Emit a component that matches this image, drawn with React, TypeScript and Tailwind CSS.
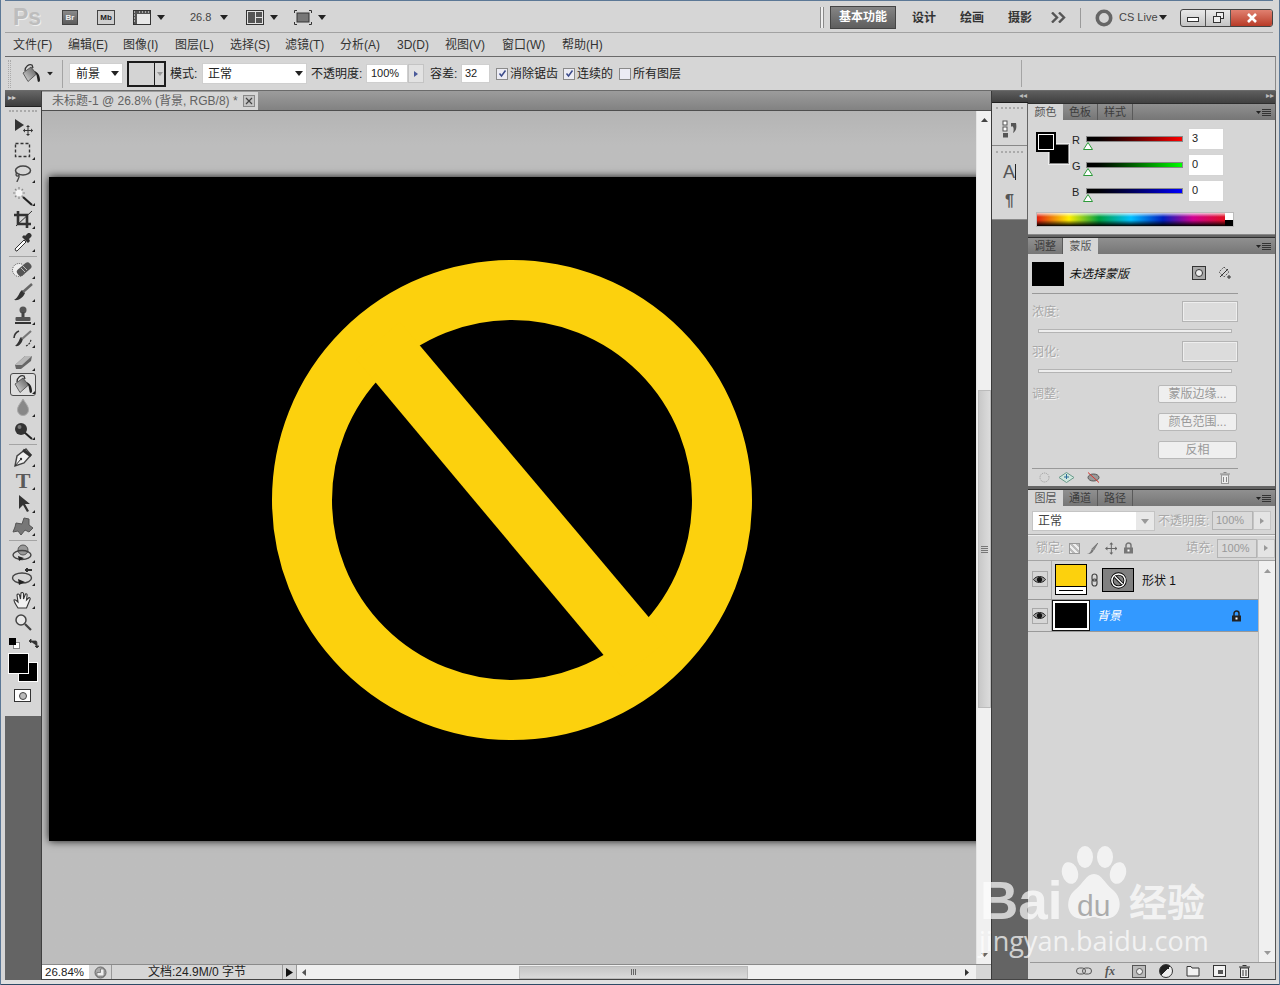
import React from "react";

const Caret = ({ className = "" }: { className?: string }) => (
  <svg width="8" height="5" viewBox="0 0 8 5" className={className}><polygon points="0,0 8,0 4,5" fill="#222" /></svg>
);

const Chk = ({ on = true }: { on?: boolean }) => (
  <span className="w-[12px] h-[12px] border border-[#8a8a8a] bg-[#ececf4] shrink-0 flex items-center justify-center">
    {on && (
      <svg width="9" height="9" viewBox="0 0 9 9"><path d="M1.5 4.5 L3.5 7 L7.5 1.5" fill="none" stroke="#3a4a8a" strokeWidth="1.5" /></svg>
    )}
  </span>
);

const PanelMenu = () => (
  <svg width="15" height="9" viewBox="0 0 15 9" className="shrink-0">
    <polygon points="0,3 5,3 2.5,6" fill="#222" />
    <path d="M6 1.5H15M6 3.5H15M6 5.5H15M6 7.5H15" stroke="#333" strokeWidth="1" />
  </svg>
);

function Tabs({ tabs, active }: { tabs: string[]; active: number }) {
  return (
    <div className="h-[17px] shrink-0 flex items-end bg-linear-to-b from-[#909090] to-[#767676] border-t border-[#2e2e2e] pr-[4px]">
      {tabs.map((t, i) => (
        <div
          key={t}
          className={
            i === active
              ? "w-[35px] h-[16px] bg-[#d6d6d6] text-[#555] text-[11px] leading-[16px] text-center"
              : "w-[35px] h-[16px] border-r border-[#5a5a5a] text-[#3c3c3c] text-[11px] leading-[16px] text-center"
          }
        >
          {t}
        </div>
      ))}
      <div className="flex-1 flex justify-end items-center h-[16px]"><PanelMenu /></div>
    </div>
  );
}

const Tool = ({ children, sel, flag = true }: { children: React.ReactNode; sel?: boolean; flag?: boolean }) => (
  <div className="h-[23px] flex items-center justify-center">
    <div className={sel ? "w-[26px] h-[23px] rounded-[3px] border border-[#4a4a4a] bg-[#dedede] flex items-center justify-center" : "w-[26px] h-[23px] flex items-center justify-center"}>
      <svg width="24" height="20" viewBox="0 0 24 20">
        {children}
        {flag && <polygon points="24,16 24,19 21,19" fill="#222" />}
      </svg>
    </div>
  </div>
);

const Sep = () => (
  <div className="h-[4px] flex items-center px-[4px]"><div className="h-px w-full bg-[#a4a4a4]" /></div>
);

const BucketShape = ({ id }: { id: string }) => (
  <>
    <defs>
      <linearGradient id={id} x1="0" y1="1" x2="1" y2="0">
        <stop offset="0" stopColor="#e4e4e4" />
        <stop offset="0.5" stopColor="#9a9a9a" />
        <stop offset="1" stopColor="#555" />
      </linearGradient>
    </defs>
    <path d="M4 7 C4 2 8 0 11 1 L12 4" fill="none" stroke="#333" strokeWidth="1.3" />
    <path d="M2 9 L10 3 L15.5 10 L7 17.5 Z" fill={"url(#" + id + ")"} stroke="#444" strokeWidth="0.8" />
    <path d="M13.5 7 C16.5 8 19 11 19 16 C19 18.5 16.5 18.5 16.5 16 L15.5 11 Z" fill="#222" />
  </>
);

const Prohibit = ({ s = 18, c = "#fff" }: { s?: number; c?: string }) => (
  <svg width={s} height={s} viewBox="0 0 18 18">
    <circle cx="9" cy="9" r="7" fill="none" stroke="#000" strokeWidth="3.4" />
    <circle cx="9" cy="9" r="7" fill="none" stroke={c} strokeWidth="1.6" />
    <path d="M5 4.5 L13.5 13" stroke="#000" strokeWidth="3.4" />
    <path d="M5 4.5 L13.5 13" stroke={c} strokeWidth="1.6" />
  </svg>
);

const Eye = () => (
  <div className="w-[16px] h-[16px] border border-[#a8a8a8] flex items-center justify-center">
    <svg width="13" height="9" viewBox="0 0 13 9">
      <path d="M0.5 4.5 C3 0.5 10 0.5 12.5 4.5 C10 8.5 3 8.5 0.5 4.5 Z" fill="#999" stroke="#222" />
      <circle cx="6.5" cy="4.5" r="2.6" fill="#111" />
    </svg>
  </div>
);

const LockIcon = ({ c = "#555" }: { c?: string }) => (
  <svg width="11" height="12" viewBox="0 0 11 12">
    <path d="M3 6V3.5a2.5 2.5 0 0 1 5 0V6" fill="none" stroke={c} strokeWidth="1.5" />
    <rect x="1" y="5.5" width="9" height="6" fill={c} />
    <rect x="4.5" y="7.5" width="2" height="2" fill="#fff" />
  </svg>
);

const Dis = "text-[#a8a8a8] text-[12px] [text-shadow:1px_1px_0_#f4f4f4]";

export default function App() {
  const menus: [string, string][] = [
    ["文件(F)", "w-[55px]"], ["编辑(E)", "w-[55px]"], ["图像(I)", "w-[52px]"], ["图层(L)", "w-[55px]"],
    ["选择(S)", "w-[55px]"], ["滤镜(T)", "w-[55px]"], ["分析(A)", "w-[57px]"], ["3D(D)", "w-[48px]"],
    ["视图(V)", "w-[57px]"], ["窗口(W)", "w-[60px]"], ["帮助(H)", "w-[60px]"],
  ];
  return (
    <div className="relative w-[1280px] h-[985px] overflow-hidden flex flex-col bg-[#d6d6d6] text-[#222] whitespace-nowrap [font-family:'Liberation_Sans','Noto_Sans_CJK_SC',sans-serif]">
      {/* title bar */}
      <div className="h-[33px] shrink-0 border-t border-[#5c7896] ml-[5px] mr-[7px] relative flex items-center pt-[1px] [&>*]:shrink-0">
        <div className="w-[53px] pl-[8px] text-[#bdbdbd] text-[23px] font-bold leading-none [text-shadow:1px_1px_0_#eee]">Ps</div>
        <div className="ml-[4px] w-[16px] h-[15px] bg-linear-to-b from-[#8a8a8a] to-[#5c5c5c] border border-[#444] text-[#eee] text-[8px] font-bold leading-[13px] text-center">Br</div>
        <div className="ml-[19px] w-[18px] h-[15px] bg-[#cfcfcf] border border-[#444] text-[#222] text-[8px] font-bold leading-[13px] text-center">Mb</div>
        <svg width="18" height="15" viewBox="0 0 18 15" className="ml-[18px]">
          <rect x="0.5" y="0.5" width="17" height="14" fill="#555" stroke="#333" />
          <rect x="4" y="4" width="13" height="10" fill="#e8e8e8" />
          <path d="M1 2h1M1 5h1M1 8h1M1 11h1M6 2h1M9 2h1M12 2h1M15 2h1" stroke="#fff" />
        </svg>
        <Caret className="ml-[6px]" />
        <div className="ml-[25px] text-[11px] text-[#444] w-[21px]">26.8</div>
        <Caret className="ml-[9px]" />
        <svg width="18" height="15" viewBox="0 0 18 15" className="ml-[18px]">
          <rect x="0.5" y="0.5" width="17" height="14" fill="#e4e4e4" stroke="#333" />
          <rect x="2" y="2" width="7" height="11" fill="#555" />
          <rect x="10" y="2" width="6" height="5" fill="#555" />
          <rect x="10" y="8" width="6" height="5" fill="#555" />
        </svg>
        <Caret className="ml-[6px]" />
        <svg width="18" height="15" viewBox="0 0 18 15" className="ml-[16px]">
          <path d="M0.5 3V0.5H3M15 0.5H17.5V3M17.5 12V14.5H15M3 14.5H0.5V12" fill="none" stroke="#333" />
          <rect x="3" y="3" width="12" height="9" fill="#777" stroke="#333" />
        </svg>
        <Caret className="ml-[6px]" />
        <div className="ml-[494px] w-[4px] h-[21px] border-x border-[#8a8a8a] bg-[#f0f0f0]" />
        <div className="ml-[6px] w-[66px] h-[23px] bg-linear-to-b from-[#858585] to-[#5e5e5e] border border-[#444] text-white text-[12px] font-bold leading-[21px] text-center">基本功能</div>
        <div className="ml-[16px] w-[24px] text-[12px] font-bold text-[#333]">设计</div>
        <div className="ml-[24px] w-[24px] text-[12px] font-bold text-[#333]">绘画</div>
        <div className="ml-[24px] w-[24px] text-[12px] font-bold text-[#333]">摄影</div>
        <svg width="15" height="11" viewBox="0 0 15 11" className="ml-[19px]">
          <path d="M1 0.5 L6 5.5 L1 10.5M8 0.5 L13 5.5 L8 10.5" fill="none" stroke="#555" strokeWidth="2.4" />
        </svg>
        <div className="ml-[14px] w-px h-[20px] bg-[#9a9a9a]" />
        <svg width="18" height="18" viewBox="0 0 18 18" className="ml-[14px]"><circle cx="9" cy="9" r="6.7" fill="none" stroke="#666" strokeWidth="3.6" /></svg>
        <div className="ml-[6px] text-[11px] text-[#444] w-[40px]">CS Live</div>
        <Caret className="ml-[0px]" />
        <div className="ml-[13px] w-[93px] h-[18px] rounded-[3px] border border-[#444] flex overflow-hidden bg-linear-to-b from-[#eaeaea] to-[#c4c4c4]">
          <div className="w-[25px] border-r border-[#555] flex items-center justify-center"><div className="w-[12px] h-[5px] border border-[#333] bg-white mt-[4px]" /></div>
          <div className="w-[25px] border-r border-[#555] flex items-center justify-center">
            <svg width="11" height="11" viewBox="0 0 11 11"><rect x="3.5" y="0.5" width="7" height="6" fill="#eee" stroke="#333" /><rect x="0.5" y="4.5" width="7" height="6" fill="#eee" stroke="#333" /></svg>
          </div>
          <div className="flex-1 bg-linear-to-b from-[#e08070] to-[#b83a26] flex items-center justify-center">
            <svg width="12" height="10" viewBox="0 0 12 10"><path d="M2 1 L10 9M10 1 L2 9" stroke="#fff" strokeWidth="2.6" /></svg>
          </div>
        </div>
        <div className="absolute left-0 right-0 bottom-0 h-px bg-[#a2a2a2]" />
      </div>

      {/* menu */}
      <div className="h-[23px] shrink-0 pl-[13px] flex items-center text-[12px] text-[#333]">
        {menus.map(([m, w]) => (<span key={m} className={w + " shrink-0"}>{m}</span>))}
      </div>

      {/* options */}
      <div className="h-[35px] shrink-0 ml-[5px] mr-[4px] border-y border-[#6a6a6a] border-r border-r-[#888] flex items-center text-[12px] [&>*]:shrink-0">
        <div className="ml-[3px] w-[3px] h-[28px] border-x border-dotted border-[#aaa]" />
        <svg width="20" height="20" viewBox="0 0 20 20" className="ml-[10px]"><BucketShape id="bk1" /></svg>
        <Caret className="ml-[5px] scale-75" />
        <div className="ml-[8px] w-px h-[28px] bg-[#a4a4a4]" />
        <div className="ml-[6px] w-[54px] h-[21px] bg-white border border-[#cfcfcf] flex items-center justify-between pl-[6px] pr-[3px]">前景<Caret /></div>
        <div className="ml-[4px] w-[39px] h-[26px] border-2 border-[#1c1c1c] flex">
          <div className="flex-1 bg-[#d4d4d4]" />
          <div className="w-[10px] border-l border-[#1c1c1c] flex items-center justify-center"><svg width="6" height="4" viewBox="0 0 6 4"><polygon points="0,0 6,0 3,4" fill="#999" /></svg></div>
        </div>
        <span className="ml-[4px] w-[28px]">模式:</span>
        <div className="ml-[4px] w-[105px] h-[21px] bg-white border border-[#cfcfcf] flex items-center justify-between pl-[5px] pr-[3px]">正常<Caret /></div>
        <span className="ml-[4px] w-[53px]">不透明度:</span>
        <div className="ml-[2px] w-[42px] h-[19px] bg-white border border-[#cfcfcf] text-[11px] leading-[17px] pl-[4px]">100%</div>
        <div className="w-[16px] h-[19px] bg-[#e2e2e2] border border-[#c4c4c4] flex items-center justify-center"><svg width="4" height="6" viewBox="0 0 4 6"><polygon points="0,0 4,3 0,6" fill="#4a5a9a" /></svg></div>
        <span className="ml-[6px] w-[28px]">容差:</span>
        <div className="ml-[3px] w-[29px] h-[19px] bg-white border border-[#cfcfcf] text-[11px] leading-[17px] pl-[3px]">32</div>
        <div className="ml-[6px]"><Chk /></div>
        <span className="ml-[2px] w-[53px]">消除锯齿</span>
        <div className="ml-[0px]"><Chk /></div>
        <span className="ml-[2px] w-[42px]">连续的</span>
        <div className="ml-[0px]"><Chk on={false} /></div>
        <span className="ml-[2px] w-[53px]">所有图层</span>
        <div className="ml-[335px] w-px h-[27px] bg-[#a4a4a4]" />
      </div>

      {/* main */}
      <div className="flex-1 min-h-0 flex ml-[5px] mr-[4px]">
        {/* tools */}
        <div className="w-[37px] shrink-0 flex flex-col border-r border-[#3f3f3f] bg-[#646464]">
          <div className="h-[16px] shrink-0 bg-linear-to-b from-[#666] to-[#3e3e3e] text-[#ccc] text-[8px] leading-[14px] pl-[3px] border-b border-[#222]">▸▸</div>
          <div className="h-[609px] shrink-0 bg-[#d6d6d6] flex flex-col">
            <div className="mx-[4px] mt-[1px] border-b-2 border-dotted border-[#aaa] h-[4px]" />
            <div className="h-[4px]" />
            <Tool flag={false}><polygon points="4,1 4,13 13,7" fill="#333" /><path d="M17 8V17M12.5 12.5H21.5" stroke="#333" /><path d="M17 7l-2 2h4zM17 18l-2-2h4zM12 12.5l2-2v4zM22 12.5l-2-2v4z" fill="#333" /></Tool>
            <Tool><rect x="4.5" y="2.5" width="14" height="13" fill="none" stroke="#333" strokeWidth="1.4" strokeDasharray="3 2" /></Tool>
            <Tool><ellipse cx="12" cy="6.5" rx="7.5" ry="4.5" fill="none" stroke="#444" strokeWidth="1.5" /><path d="M5.5 9 C4 12 7 13 8 11 C9 14 6 16 6 18" fill="none" stroke="#444" strokeWidth="1.3" /></Tool>
            <Tool><path d="M12 10 L21 18" stroke="#222" strokeWidth="2.2" /><path d="M8 0V12M2 6H14M4 2L12 10M12 2L4 10" stroke="#8a8a8a" strokeWidth="1.2" /><circle cx="8" cy="6" r="3.5" fill="#f4f4f4" /></Tool>
            <Tool><path d="M7 1V14H20" fill="none" stroke="#333" strokeWidth="2.6" /><path d="M3 5H16V18" fill="none" stroke="#333" strokeWidth="2.6" /><path d="M5 16L21 1" stroke="#333" /></Tool>
            <Tool><path d="M5 18 L4 16 L13 7 L15 9 L6 18 Z" fill="#fff" stroke="#333" /><path d="M12 5 L17 10 L19 8 L18 6 L20 4 A2.5 2.5 0 0 0 16 1 L14 3 L13 2 L11 4 Z" fill="#333" /></Tool>
            <Sep />
            <Tool><circle cx="8" cy="10" r="6.5" fill="#eee" stroke="#555" strokeDasharray="1 1" /><rect x="5" y="5.5" width="16" height="7.5" rx="3" fill="#555" transform="rotate(-40 13 9)" /><path d="M10 8l4 4M12 6l4 4" stroke="#bbb" strokeWidth="1" /></Tool>
            <Tool><path d="M3 17 C9 18 13 13 14 10 L11 7 C8 9 8 14 3 17 Z" fill="#333" /><path d="M12 9 L21 1" stroke="#666" strokeWidth="2.4" /></Tool>
            <Tool><circle cx="12" cy="4" r="3.5" fill="#555" /><rect x="10.5" y="6" width="3" height="6" fill="#444" /><rect x="4.5" y="11" width="15" height="4" rx="1" fill="#555" /><rect x="4" y="16" width="16" height="2" fill="#333" /></Tool>
            <Tool><path d="M4 17 C9 18 11 13 12 10 L10 8 C8 10 8 14 4 17 Z" fill="#333" /><path d="M11 10 L20 2" stroke="#777" strokeWidth="2.2" /><path d="M8 2 A8 8 0 0 0 3 9" fill="none" stroke="#333" strokeWidth="1.6" /><path d="M15 17 A8 8 0 0 0 20 10" fill="none" stroke="#333" strokeWidth="1.2" strokeDasharray="2 1" /></Tool>
            <Tool><polygon points="4,13 14,4 21,4 20,9 10,17 5,17" fill="#666" /><polygon points="4,13 14,4 21,4 11,13" fill="#b8b8b8" /></Tool>
            <Tool sel><g transform="translate(2 0)"><BucketShape id="bk2" /></g></Tool>
            <Tool><path d="M12 1 C9 6 6.5 8 6.5 12 A5.5 5.5 0 0 0 17.5 12 C17.5 8 15 6 12 1 Z" fill="#888" stroke="#aaa" /></Tool>
            <Tool><path d="M13 11 L21 18" stroke="#222" strokeWidth="2" /><circle cx="10" cy="8" r="6" fill="#333" /><circle cx="8.5" cy="6" r="2" fill="#777" /></Tool>
            <Sep />
            <Tool><path d="M4 18 L6 8 L15 1 L20 7 L13 15 Z" fill="#f0f0f0" stroke="#444" strokeWidth="1.4" /><path d="M12 2 L20 8" stroke="#333" strokeWidth="3" /><path d="M4 18 L10 11" stroke="#333" /><circle cx="10" cy="11" r="1.2" fill="#333" /></Tool>
            <div className="relative">
              <Tool><rect width="0" height="0" /></Tool>
              <span className="absolute inset-0 flex items-center justify-center text-[22px] leading-none text-[#5a5a5a] font-bold [font-family:'Liberation_Serif',serif]">T</span>
            </div>
            <Tool><polygon points="8,1 8,15 12,11 16,18 18,17 14,10 19,10" fill="#333" /></Tool>
            <Tool><path d="M5 6 L11 7 L13 1 L18 2 L18 8 L22 11 L18 15 L14 13 L10 18 L7 14 L2 15 L4 10 Z" fill="#777" stroke="#555" /></Tool>
            <Sep />
            <Tool><circle cx="12" cy="6" r="5" fill="#999" stroke="#555" /><ellipse cx="11" cy="11" rx="9" ry="4.5" fill="none" stroke="#444" strokeWidth="1.4" /><polygon points="7,12 13,14 8,17" fill="#222" /></Tool>
            <Tool><ellipse cx="11" cy="11" rx="9.5" ry="5" fill="none" stroke="#444" strokeWidth="1.4" /><polygon points="7,12 14,15 8,18" fill="#222" /><path d="M14 3H21" stroke="#333" strokeWidth="2" /><rect x="15" y="1" width="2" height="4" fill="#333" /></Tool>
            <Tool><path d="M7 18 C5 15 3 12 3 10 C4 9 6 11 7 12 L6 5 C6.5 3.5 8 4 8.5 5 L9.5 9 L10 3 C11 2 12 2.5 12.5 3.5 L12.5 9 L14.5 4 C15.5 3.5 16.5 4 16 6 L15.5 10 L18 7.5 C19 7.5 19.5 8.5 19 9.5 L15.5 18 Z" fill="#f2f2f2" stroke="#333" strokeWidth="1.1" /></Tool>
            <Tool flag={false}><circle cx="10" cy="7" r="5" fill="#e8e8e8" stroke="#444" strokeWidth="1.5" /><path d="M14 11 L20 17" stroke="#444" strokeWidth="2.2" /></Tool>
            <div className="h-[3px]" />
            <div className="h-[13px] flex items-center pl-[4px] gap-[8px]">
              <div className="relative w-[11px] h-[11px]">
                <div className="absolute right-0 bottom-0 w-[7px] h-[7px] bg-white border border-[#888]" />
                <div className="absolute left-0 top-0 w-[7px] h-[7px] bg-black" />
              </div>
              <svg width="11" height="11" viewBox="0 0 11 11"><path d="M2 3 L8 3 C9 3 9 5 9 8M1 3l2-2v4zM9 10l-2-2h4z" fill="#333" stroke="#333" strokeWidth="0.8" /></svg>
            </div>
            <div className="relative h-[35px] mt-[3px]">
              <div className="absolute left-[13px] top-[9px] w-[20px] h-[20px] bg-black border border-white" />
              <div className="absolute left-[3px] top-0 w-[21px] h-[21px] bg-black border border-white" />
            </div>
            <div className="ml-[9px] mt-[1px] w-[17px] h-[13px] bg-white border border-[#333] flex items-center justify-center"><div className="w-[8px] h-[8px] rounded-full bg-[#bbb] border border-[#444]" /></div>
          </div>
        </div>

        {/* center */}
        <div className="flex-1 min-w-0 flex flex-col">
          <div className="h-[20px] shrink-0 bg-linear-to-b from-[#9c9c9c] to-[#828282] border-b border-[#4e4e4e] flex items-end">
            <div className="w-[216px] h-[18px] bg-[#d6d6d6] flex items-center pl-[10px] text-[12px] text-[#626262] whitespace-nowrap">
              <span className="w-[191px]">未标题-1 @ 26.8% (背景, RGB/8) *</span>
              <div className="w-[12px] h-[12px] border border-[#888] bg-[#c4c4c4] flex items-center justify-center">
                <svg width="8" height="8" viewBox="0 0 8 8"><path d="M1 1L7 7M7 1L1 7" stroke="#444" strokeWidth="1.2" /></svg>
              </div>
            </div>
          </div>
          <div className="flex-1 min-h-0 flex">
            <div className="flex-1 min-w-0 bg-linear-to-b from-[#b4b4b4] via-[#bdbdbd] via-[4%] to-[#bdbdbd] overflow-hidden">
              <div className="ml-[7px] mt-[66px] w-[960px] h-[664px] bg-black shadow-[0_0_8px_rgba(0,0,0,0.9)] flex">
                <svg width="480" height="480" viewBox="0 0 480 480" className="ml-[223px] mt-[83px]">
                  <circle cx="240" cy="240" r="210" fill="none" stroke="#fcd10d" strokeWidth="60" />
                  <polygon points="84,99 350,417 396,380 128,62" fill="#fcd10d" />
                </svg>
              </div>
            </div>
            {/* v scroll */}
            <div className="w-[15px] shrink-0 bg-[#f0f0f0] flex flex-col items-center pt-[7px] border-l border-[#e4e4e4]">
              <svg width="7" height="4" viewBox="0 0 7 4"><polygon points="3.5,0 7,4 0,4" fill="#444" /></svg>
              <div className="mt-[268px] w-[13px] h-[318px] bg-linear-to-r from-[#c8c8c8] to-[#dcdcdc] border border-[#bbb] flex flex-col items-center justify-center gap-[1px]">
                <div className="w-[7px] h-px bg-[#777]" /><div className="w-[7px] h-px bg-[#777]" /><div className="w-[7px] h-px bg-[#777]" /><div className="w-[7px] h-px bg-[#777]" />
              </div>
              <div className="mt-[245px]"><svg width="7" height="4" viewBox="0 0 7 4"><polygon points="0,0 7,0 3.5,4" fill="#666" /></svg></div>
            </div>
          </div>
          {/* status */}
          <div className="h-[16px] shrink-0 flex border-t border-[#8a8a8a] border-b border-b-[#444] text-[12px] leading-[14px]">
            <div className="w-[47px] bg-white pl-[3px] text-[11.5px] text-[#222]">26.84%</div>
            <div className="w-[23px] border-r border-[#999] flex items-center justify-center">
              <svg width="13" height="13" viewBox="0 0 13 13"><circle cx="6.5" cy="6.5" r="5.5" fill="#aaa" stroke="#666" /><path d="M6.5 6.5V3H10V10H3V6.5Z" fill="#eee" stroke="#555" strokeWidth="0.6" /></svg>
            </div>
            <div className="w-[171px] text-center border-r border-[#999]">文档:24.9M/0 字节</div>
            <div className="w-[14px] border-r border-[#999] flex items-center justify-center"><svg width="7" height="9" viewBox="0 0 7 9"><polygon points="0,0 7,4.5 0,9" fill="#111" /></svg></div>
            <div className="flex-1 bg-[#f0f0f0] flex items-center pl-[5px]">
              <svg width="4" height="7" viewBox="0 0 4 7"><polygon points="4,0 4,7 0,3.5" fill="#555" /></svg>
              <div className="ml-[213px] w-[229px] h-[13px] bg-linear-to-b from-[#c6c6c6] to-[#dadada] border border-[#bbb] flex items-center justify-center gap-[1px]">
                <div className="w-px h-[6px] bg-[#666]" /><div className="w-px h-[6px] bg-[#666]" /><div className="w-px h-[6px] bg-[#666]" />
              </div>
              <svg width="4" height="7" viewBox="0 0 4 7" className="ml-[217px]"><polygon points="0,0 4,3.5 0,7" fill="#333" /></svg>
            </div>
            <div className="w-[15px] bg-[#d6d6d6]" />
          </div>
        </div>

        {/* dock */}
        <div className="w-[37px] shrink-0 flex flex-col bg-[#646464] border-l border-[#3a3a3a] border-b border-b-[#444]">
          <div className="h-[12px] shrink-0 bg-linear-to-b from-[#5e5e5e] to-[#404040] border-b border-[#1e1e1e] text-[#bbb] text-[8px] leading-[10px] text-right pr-[1px]">◂◂</div>
          <div className="h-[43px] shrink-0 bg-[#d6d6d6] border-b border-[#888] flex flex-col items-center mr-px">
            <div className="w-[27px] mt-[4px] border-t-2 border-dotted border-[#aaa]" />
            <svg width="16" height="18" viewBox="0 0 16 18" className="mt-[11px]">
              <rect x="1" y="1" width="4" height="4" fill="#fff" stroke="#555" />
              <rect x="1" y="7" width="4" height="4" fill="#fff" stroke="#555" />
              <rect x="1" y="13" width="5" height="4.5" fill="#555" />
              <path d="M9 3 H14 C15 8 14 11 11 13 C12 10 12 7 10 6 L9 7 Z" fill="#555" />
            </svg>
          </div>
          <div className="h-[74px] shrink-0 bg-[#d6d6d6] border-b border-[#888] flex flex-col items-center mr-px">
            <div className="w-[27px] mt-[5px] border-t-2 border-dotted border-[#aaa]" />
            <div className="mt-[10px] flex items-center text-[18px] leading-[18px] text-[#555]">A<div className="w-px h-[16px] bg-[#222]" /></div>
            <div className="mt-[11px] text-[16px] leading-[18px] font-bold text-[#555]">¶</div>
          </div>
        </div>

        {/* panels */}
        <div className="w-[248px] shrink-0 flex flex-col border-r border-[#555] border-b border-b-[#444]">
          <div className="h-[12px] shrink-0 bg-linear-to-b from-[#5e5e5e] to-[#404040] text-[#bbb] text-[8px] leading-[10px] text-right pr-[1px]">▸▸</div>
          <Tabs tabs={["颜色", "色板", "样式"]} active={0} />
          {/* color */}
          <div className="h-[115px] shrink-0 pl-[8px] pt-[8px] border-b border-[#888]">
            <div className="flex">
              <div className="relative w-[36px] h-[40px]">
                <div className="absolute left-[13px] top-[16px] w-[20px] h-[20px] bg-black border border-[#888] outline outline-1 outline-[#eee]" />
                <div className="absolute left-0 top-[4px] w-[20px] h-[20px] bg-black border-2 border-black outline outline-1 outline-[#fff] -outline-offset-3" />
              </div>
              <div className="flex flex-col gap-[4px]">
                {[
                  ["R", "3", "bg-linear-to-r from-black to-[#ff0000]"],
                  ["G", "0", "bg-linear-to-r from-black to-[#00ff00]"],
                  ["B", "0", "bg-linear-to-r from-black to-[#0000ff]"],
                ].map(([l, v, g]) => (
                  <div key={l} className="h-[22px] flex">
                    <span className="w-[14px] text-[11px] leading-[24px] text-[#222]">{l}</span>
                    <div className="relative w-[97px] mt-[8px]">
                      <div className={"h-[6px] border border-[#888] " + g} />
                      <svg width="10" height="8" viewBox="0 0 10 8" className="absolute -left-[3px] top-[6px]"><polygon points="5,0.5 9.5,7.5 0.5,7.5" fill="#fff" stroke="#2d9a3a" /></svg>
                    </div>
                    <div className="ml-[5px] w-[36px] h-[22px] bg-white border border-[#d4d4d4] text-[11px] leading-[18px] pl-[3px] text-[#222]">{v}</div>
                  </div>
                ))}
              </div>
            </div>
            <div className="mt-[10px] w-[198px] h-[15px] flex border border-[#bbb]">
              <div className="flex-1 bg-[linear-gradient(to_bottom,rgba(255,255,255,0.75),transparent_30%,transparent_55%,#000),linear-gradient(to_right,#e02010,#ffee00_17%,#00a040_33%,#00c0ff_50%,#0020c0_67%,#d00090_83%,#e01020)]" />
              <div className="w-[8px] flex flex-col"><div className="flex-1 bg-white" /><div className="flex-1 bg-black" /></div>
            </div>
          </div>
          <div className="h-[2px] shrink-0 bg-[#646464]" />
          <Tabs tabs={["调整", "蒙版"]} active={1} />
          {/* masks */}
          <div className="h-[233px] shrink-0 pl-[4px] flex flex-col border-b border-[#666]">
            <div className="h-[40px] shrink-0 flex items-start pt-[8px] w-[206px] border-b border-[#999]">
              <div className="w-[32px] h-[24px] bg-black" />
              <span className="ml-[5px] mt-[5px] w-[108px] text-[12px] leading-[14px] italic text-[#111]">未选择蒙版</span>
              <div className="ml-[15px] mt-[4px] w-[14px] h-[14px] border border-[#333] bg-[#aaa] flex items-center justify-center"><div className="w-[8px] h-[8px] rounded-full border border-[#333] bg-[#eee]" /></div>
              <svg width="14" height="14" viewBox="0 0 14 14" className="ml-[11px] mt-[4px]"><path d="M7 1 L12 6 L7 11 L2 6 Z" fill="none" stroke="#555" strokeDasharray="1.5 1" /><path d="M3 11L11 3M10 11h4M12 9v4" stroke="#333" /></svg>
            </div>
            <div className="w-[206px] h-[21px] mt-[7px] flex items-center justify-between">
              <span className={Dis}>浓度:</span>
              <div className="w-[56px] h-[21px] border border-[#b4b4b4] bg-[#dcdcdc] shadow-[inset_0_0_0_1px_#eee]" />
            </div>
            <div className="ml-[6px] mt-[7px] w-[194px] h-[4px] bg-[#eee] border border-[#b4b4b4]" />
            <div className="w-[206px] h-[21px] mt-[8px] flex items-center justify-between">
              <span className={Dis}>羽化:</span>
              <div className="w-[56px] h-[21px] border border-[#b4b4b4] bg-[#dcdcdc] shadow-[inset_0_0_0_1px_#eee]" />
            </div>
            <div className="ml-[6px] mt-[7px] w-[194px] h-[4px] bg-[#eee] border border-[#b4b4b4]" />
            <div className="w-[205px] mt-[12px] flex items-start justify-between">
              <span className={Dis}>调整:</span>
              <div className="w-[79px] flex flex-col gap-[10px] text-[12px] text-[#999]">
                {["蒙版边缘...", "颜色范围...", "反相"].map((b) => (
                  <div key={b} className="h-[18px] bg-[#efefef] border border-[#b8b8b8] rounded-[2px] text-center leading-[16px]">{b}</div>
                ))}
              </div>
            </div>
            <div className="mt-[9px] w-[206px] h-[18px] border-t border-[#999] flex items-center">
              <svg width="11" height="11" viewBox="0 0 11 11" className="ml-[7px]"><circle cx="5.5" cy="5.5" r="4.5" fill="none" stroke="#999" strokeDasharray="1 1" /></svg>
              <svg width="17" height="11" viewBox="0 0 17 11" className="ml-[8px]"><path d="M8.5 0.5 L16 5.5 L8.5 10.5 L1 5.5 Z" fill="#cfe6dc" stroke="#6a9a8a" /><path d="M8.5 2V7M6 5h5" stroke="#2a6a9a" /></svg>
              <svg width="13" height="11" viewBox="0 0 13 11" className="ml-[12px]"><ellipse cx="6.5" cy="5.5" rx="5.5" ry="3.5" fill="#999" stroke="#555" /><path d="M1 0.5L12 10.5" stroke="#d9352c" /></svg>
              <svg width="10" height="12" viewBox="0 0 10 12" className="ml-[120px]"><rect x="1.5" y="3" width="7" height="8.5" fill="#eee" stroke="#999" /><path d="M0 2H10M3.5 0.5h3" stroke="#888" /><path d="M3.5 5V10M6.5 5V10" stroke="#888" /></svg>
            </div>
          </div>
          <div className="h-[2px] shrink-0 bg-[#646464]" />
          <Tabs tabs={["图层", "通道", "路径"]} active={0} />
          {/* layers */}
          <div className="flex-1 min-h-0 flex flex-col">
            <div className="h-[29px] shrink-0 border-b border-[#a4a4a4] flex items-start pt-[5px] pl-[4px]">
              <div className="w-[123px] h-[20px] bg-white border border-[#c4c4c4] flex text-[12px] text-[#444] leading-[18px] pl-[5px]">
                <span className="flex-1">正常</span>
                <div className="w-[18px] bg-[#e8e8e8] flex items-center justify-center"><svg width="8" height="5" viewBox="0 0 8 5"><polygon points="0,0 8,0 4,5" fill="#999" /></svg></div>
              </div>
              <span className={Dis + " ml-[3px] w-[54px] leading-[20px]"}>不透明度:</span>
              <div className="w-[41px] h-[19px] border border-[#b4b4b4] bg-[#dadada] text-[11px] text-[#999] leading-[17px] pl-[3px]">100%</div>
              <div className="w-[18px] h-[19px] border border-[#c4c4c4] bg-[#e4e4e4] flex items-center justify-center"><svg width="4" height="6" viewBox="0 0 4 6"><polygon points="0,0 4,3 0,6" fill="#999" /></svg></div>
            </div>
            <div className="h-[26px] shrink-0 border-b border-[#a4a4a4] flex items-center pl-[8px] border-t border-t-[#eee]">
              <span className={Dis + " w-[34px]"}>锁定:</span>
              <div className="w-[11px] h-[11px] border border-[#999] bg-[linear-gradient(45deg,#bbb_25%,#eee_25%,#eee_50%,#bbb_50%,#bbb_75%,#eee_75%)] bg-[length:6px_6px]" />
              <svg width="13" height="13" viewBox="0 0 13 13" className="ml-[6px]"><path d="M1 12 C4 12 5 9 6 7 L8 8 C7 11 4 13 1 12 Z" fill="#777" /><path d="M6 7 L12 1 L8 8" fill="#888" stroke="#777" /></svg>
              <svg width="13" height="13" viewBox="0 0 13 13" className="ml-[6px]"><path d="M6.5 1V12M1 6.5H12" stroke="#666" /><path d="M6.5 0l-2 2.5h4zM6.5 13l-2-2.5h4zM0 6.5l2.5-2v4zM13 6.5l-2.5-2v4z" fill="#666" /></svg>
              <div className="ml-[6px]"><LockIcon c="#777" /></div>
              <span className={Dis + " ml-[52px] w-[29px]"}>填充:</span>
              <div className="ml-[3px] w-[41px] h-[19px] border border-[#b4b4b4] bg-[#dadada] text-[11px] text-[#999] leading-[17px] pl-[3px]">100%</div>
              <div className="w-[18px] h-[19px] border border-[#c4c4c4] bg-[#e4e4e4] flex items-center justify-center"><svg width="4" height="6" viewBox="0 0 4 6"><polygon points="0,0 4,3 0,6" fill="#999" /></svg></div>
            </div>
            <div className="flex-1 min-h-0 flex">
              <div className="flex-1 min-w-0 flex flex-col">
                <div className="h-[39px] shrink-0 flex border-b border-[#999]">
                  <div className="w-[24px] border-r border-[#aaa] flex items-start justify-center pt-[10px]"><Eye /></div>
                  <div className="ml-[3px] mt-[3px] w-[32px] h-[31px] border border-black bg-white flex flex-col">
                    <div className="flex-1 bg-[#fcd10d] border-b border-black" />
                    <div className="h-[7px] flex items-center justify-center"><div className="w-[24px] h-px bg-black" /></div>
                  </div>
                  <svg width="7" height="14" viewBox="0 0 7 14" className="ml-[4px] mt-[12px]"><rect x="1" y="1" width="5" height="7" rx="2.5" fill="none" stroke="#444" strokeWidth="1.2" /><rect x="1" y="6" width="5" height="7" rx="2.5" fill="none" stroke="#444" strokeWidth="1.2" /></svg>
                  <div className="ml-[4px] mt-[7px] w-[32px] h-[24px] border border-black bg-[#808080] flex items-center justify-center"><Prohibit s={17} /></div>
                  <span className="ml-[8px] mt-[12px] text-[12px] leading-[16px] text-[#111] whitespace-nowrap">形状 1</span>
                </div>
                <div className="h-[32px] shrink-0 flex border-b border-[#999]">
                  <div className="w-[24px] border-r border-[#aaa] flex items-center justify-center"><Eye /></div>
                  <div className="flex-1 bg-[#3399ff] flex items-center">
                    <div className="ml-px w-[36px] h-[29px] bg-black border-2 border-white outline outline-1 outline-[#111]" />
                    <span className="ml-[8px] w-[134px] text-[12px] italic text-white">背景</span>
                    <LockIcon c="#222" />
                  </div>
                </div>
              </div>
              <div className="w-[17px] shrink-0 bg-[#f0f0f0] border-l border-[#bbb] flex flex-col items-center pt-[8px] pb-[7px] justify-between">
                <svg width="7" height="4" viewBox="0 0 7 4"><polygon points="3.5,0 7,4 0,4" fill="#999" /></svg>
                <svg width="7" height="4" viewBox="0 0 7 4"><polygon points="0,0 7,0 3.5,4" fill="#999" /></svg>
              </div>
            </div>
            <div className="h-[17px] shrink-0 border-t border-[#999] flex items-center pl-[46px] ml-[2px] gap-[13px]">
              <svg width="16" height="8" viewBox="0 0 16 8"><rect x="0.5" y="1" width="9" height="6" rx="3" fill="none" stroke="#555" /><rect x="6.5" y="1" width="9" height="6" rx="3" fill="none" stroke="#555" /></svg>
              <span className="w-[14px] text-[12px] italic font-bold leading-[14px] text-[#555] [font-family:'Liberation_Serif',serif]">fx</span>
              <div className="w-[14px] h-[13px] border border-[#555] bg-[#bbb] flex items-center justify-center"><div className="w-[7px] h-[7px] rounded-full bg-[#eee] border border-[#555]" /></div>
              <div className="w-[14px] h-[14px] rounded-full border border-[#333] bg-[linear-gradient(135deg,#222_50%,#eee_50%)]" />
              <svg width="14" height="12" viewBox="0 0 14 12"><path d="M1 11V1.5H5L6 3H13V11Z" fill="#f2f2f2" stroke="#333" /></svg>
              <svg width="13" height="12" viewBox="0 0 13 12"><rect x="0.5" y="0.5" width="12" height="11" fill="#f2f2f2" stroke="#333" /><rect x="5" y="5" width="5" height="4" fill="#555" /></svg>
              <svg width="11" height="13" viewBox="0 0 11 13"><rect x="1.5" y="3" width="8" height="9.5" fill="#eee" stroke="#333" /><path d="M0 2H11M3.5 0.5h4" stroke="#333" /><path d="M4 5V11M7 5V11" stroke="#333" /></svg>
            </div>
          </div>
        </div>
      </div>

      {/* bottom frame */}
      <div className="h-[5px] shrink-0 bg-[#e0e0e0] border-b border-[#2e4a66]" />

      {/* left frame */}
      <div className="absolute left-0 top-0 bottom-0 w-[1px] bg-[#5c7896]" />
      <div className="absolute right-0 top-0 bottom-0 w-[1px] bg-[#5c7896]" />

      {/* watermark */}
      <div className="absolute left-[980px] top-[845px] w-[240px] h-[125px] pointer-events-none text-white opacity-70">
        <span className="absolute left-[0px] top-[35px] text-[53px] leading-[42px] font-bold [font-family:'Liberation_Sans',sans-serif]">Bai</span>
        <svg width="66" height="76" viewBox="0 0 66 76" className="absolute left-[81px] top-[1px]">
          <ellipse cx="9" cy="27" rx="8" ry="11" fill="#fff" transform="rotate(-15 9 27)" />
          <ellipse cx="24" cy="11" rx="8" ry="11" fill="#fff" />
          <ellipse cx="44" cy="11" rx="8" ry="11" fill="#fff" />
          <ellipse cx="57" cy="27" rx="8" ry="11" fill="#fff" transform="rotate(15 57 27)" />
          <path d="M33 28 C41 28 43 37 52 44 C62 52 62 72 44 73 C38 73 36 71 33 71 C30 71 27 73 21 73 C4 72 4 52 14 44 C23 37 25 28 33 28 Z" fill="#fff" />
        </svg>
        <span className="absolute left-[97px] top-[44px] text-[30px] leading-[34px] text-[#9a9a9a] [font-family:'Liberation_Sans',sans-serif]">du</span>
        <span className="absolute left-[149px] top-[33px] text-[38px] leading-[44px] font-bold whitespace-nowrap [font-family:'Noto_Sans_CJK_SC',sans-serif]">经验</span>
        <span className="absolute left-[-1px] top-[80px] text-[27px] leading-[32px] whitespace-nowrap [font-family:'Open_Sans',sans-serif]">jingyan.baidu.com</span>
      </div>
    </div>
  );
}
